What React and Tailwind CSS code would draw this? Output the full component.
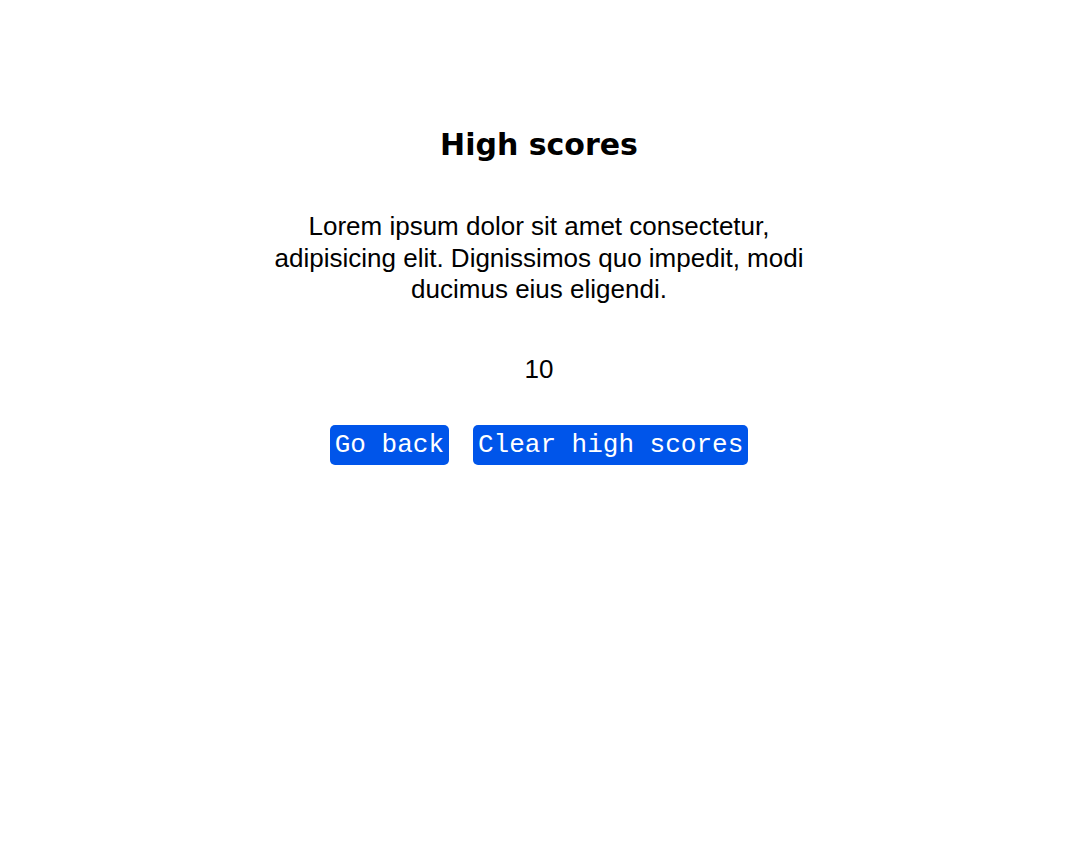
import React from "react";

export default function App() {
    return (
        <div className="min-h-screen bg-white text-black flex flex-col items-center pt-[127px]">
            <h1 className="font-['DejaVu_Sans',Verdana,sans-serif] font-bold text-[30px] leading-[35px]">
                High scores
            </h1>

            <p className="mt-[49px] w-1/2 text-center font-['Liberation_Sans',Arial,sans-serif] text-[26px] leading-[31.5px]">
                Lorem ipsum dolor sit amet consectetur, adipisicing elit. Dignissimos
                quo impedit, modi ducimus eius eligendi.
            </p>

            <p className="mt-[48px] font-['Liberation_Sans',Arial,sans-serif] text-[26px] leading-[31px]">
                10
            </p>

            <div className="mt-[40px] flex gap-6">
                <button
                    type="button"
                    className="bg-[#0055ea] text-white rounded-[5px] px-[5px] h-[40px] font-['Liberation_Mono','Courier_New',monospace] text-[26px] leading-[30px]"
                >
                    Go back
                </button>
                <button
                    type="button"
                    className="bg-[#0055ea] text-white rounded-[5px] px-[5px] h-[40px] font-['Liberation_Mono','Courier_New',monospace] text-[26px] leading-[30px]"
                >
                    Clear high scores
                </button>
            </div>
        </div>
    );
}
